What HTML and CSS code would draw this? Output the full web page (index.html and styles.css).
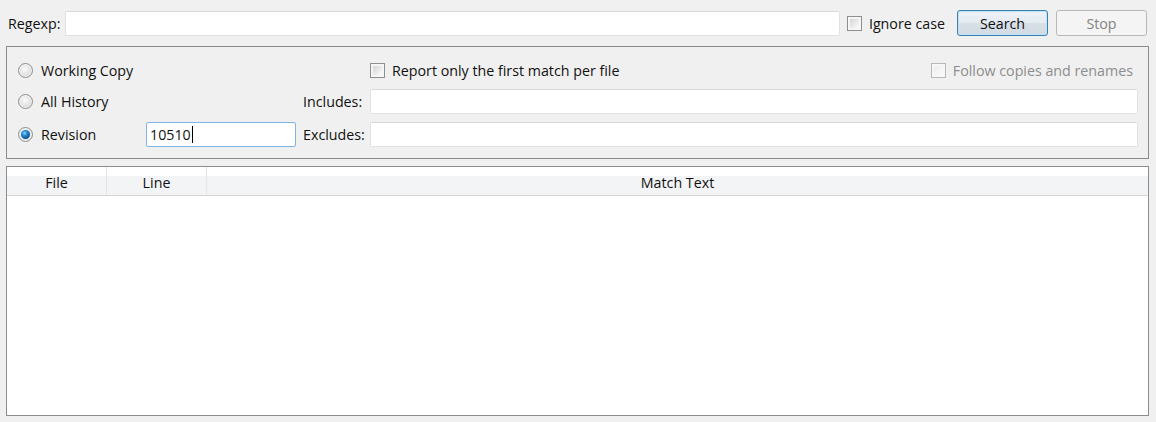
FILE: index.html
```html
<!DOCTYPE html>
<html>
<head>
<meta charset="utf-8">
<link rel="stylesheet" href="styles.css">
</head>
<body>
<div class="topbar">
  <span class="lbl">Regexp:</span>
  <div class="input grow"></div>
  <label class="check ml7"><span class="box"></span><span>Ignore case</span></label>
  <button class="btn default">Search</button>
  <button class="btn disabled">Stop</button>
</div>

<div class="group">
  <div class="opt r1 c1"><span class="radio"></span><span>Working Copy</span></div>
  <div class="r1 c4 row1">
    <label class="check"><span class="box"></span><span>Report only the first match per file</span></label>
    <label class="check dim"><span class="box"></span><span>Follow copies and renames</span></label>
  </div>

  <div class="opt r2 c1"><span class="radio"></span><span>All History</span></div>
  <div class="flabel r2 c3">Includes:</div>
  <div class="input r2 c4"></div>

  <div class="opt r3 c1"><span class="radio on"></span><span>Revision</span></div>
  <div class="input focus r3 c2"><span class="val">10510</span><span class="caret"></span></div>
  <div class="flabel r3 c3">Excludes:</div>
  <div class="input r3 c4"></div>
</div>

<div class="table">
  <div class="thead">
    <div class="th col-file">File</div>
    <div class="th col-line">Line</div>
    <div class="th col-text">Match Text</div>
  </div>
  <div class="tbody"></div>
</div>
</body>
</html>
```

FILE: styles.css
```css
* { box-sizing: border-box; }
html, body { margin: 0; padding: 0; }
body {
  width: 1156px;
  height: 422px;
  background: #f0f0f0;
  font-family: "Open Sans", "Noto Sans", sans-serif;
  font-size: 14.25px;
  color: #111;
  overflow: hidden;
}

.topbar {
  display: flex;
  align-items: center;
  height: 36px;
  padding: 10px 9px 0 8px;
}
.lbl { margin-right: 5px; }
.grow { flex: 1; }

.input {
  height: 25px;
  background: #fff;
  border: 1px solid #e0e1e6;
  border-top-color: #d8d9df;
  border-radius: 2px;
  display: flex;
  align-items: center;
  padding-left: 3px;
}
.input.focus { border-color: #7eb4ea; }
.caret {
  display: inline-block;
  width: 1px;
  height: 17px;
  background: #000;
  margin-left: 1px;
}

.check {
  display: flex;
  align-items: center;
  gap: 7px;
  white-space: nowrap;
}
.ml7 { margin-left: 7px; }
.box {
  width: 15px;
  height: 15px;
  flex: none;
  border: 1px solid #8e8f8f;
  padding: 2px;
  background: linear-gradient(135deg, #d6d6d6, #fbfbfb) content-box, #f6f6f6;
}
.check.dim { color: #8d8d8d; margin-right: 5px; }
.check.dim .box {
  border-color: #b8b8b8;
  background: linear-gradient(135deg, #ececec, #fcfcfc) content-box, #f7f7f7;
}

.btn {
  font-family: inherit;
  font-size: 14.25px;
  width: 91px;
  height: 26px;
  border-radius: 3px;
  padding: 0;
  color: #111;
}
.btn.default {
  margin-left: 12px;
  border: 1px solid #3c7fb1;
  background: linear-gradient(#edf3f8 0%, #e4ebf1 48%, #d7dfe7 52%, #d2dbe3 100%);
  box-shadow: inset 0 0 0 1px #bfe3f8;
}
.btn.disabled {
  margin-left: 8px;
  border: 1px solid #b5b9bc;
  background: #f4f4f4;
  color: #838383;
}

.group {
  margin: 10px 7px 0 6px;
  border: 1px solid #8c8c8c;
  padding: 11px 10px 11px 11px;
  display: grid;
  grid-template-columns: 128px 150px 74px 1fr;
  grid-template-rows: 31px 33px 25px;
  align-items: start;
}
.r1 { grid-row: 1; }
.r2 { grid-row: 2; }
.r3 { grid-row: 3; }
.c1 { grid-column: 1; }
.c2 { grid-column: 2; }
.c3 { grid-column: 3; }
.c4 { grid-column: 4; }

.opt {
  display: flex;
  align-items: center;
  gap: 8px;
  height: 25px;
}
.radio {
  width: 15px;
  height: 15px;
  flex: none;
  border-radius: 50%;
  border: 1px solid #8e8f8f;
  background: radial-gradient(circle at 45% 40%, #fbfbfb 0%, #e6e6e6 45%, #cfcfcf 100%);
  box-shadow: inset 0 0 0 1px #f4f4f4;
  position: relative;
}
.radio.on::after {
  content: "";
  position: absolute;
  left: 2px;
  top: 2px;
  width: 9px;
  height: 9px;
  border-radius: 50%;
  background: radial-gradient(circle at 40% 35%, #8fd4ff 0%, #1f85d0 35%, #0a4d86 75%, #0f2f4d 100%);
}
.row1 {
  display: flex;
  align-items: center;
  justify-content: space-between;
  height: 25px;
}
.flabel {
  height: 25px;
  display: flex;
  align-items: center;
  padding-left: 7px;
}

.table {
  margin: 7px 7px 0 6px;
  height: 250px;
  border: 1px solid #8c8c8c;
  background: #fff;
}
.thead {
  display: flex;
  height: 29px;
  background: linear-gradient(#ffffff 0 9px, #f3f4f6 9px);
  border-bottom: 1px solid #d5d5d5;
}
.th {
  display: flex;
  align-items: center;
  justify-content: center;
  padding-top: 2px;
}
.col-file { width: 100px; border-right: 1px solid #e3e4e6; }
.col-line { width: 100px; border-right: 1px solid #e3e4e6; }
.col-text { flex: 1; }
```
